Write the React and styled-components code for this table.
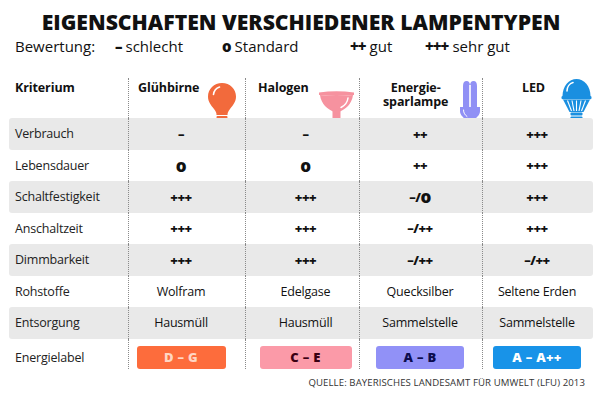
import React from "react";
import styled, { createGlobalStyle } from "styled-components";

const GlobalStyle = createGlobalStyle`
  html, body { margin: 0; padding: 0; background: #fff; }
  body { font-family: "Open Sans", "Noto Sans", sans-serif; color: #111; }
`;

const Page = styled.div`
  width: 600px;
  height: 400px;
  box-sizing: border-box;
  padding: 9px 7px 0 9px;
  display: flex;
  flex-direction: column;
  overflow: hidden;
`;

const Title = styled.h1`
  margin: 0;
  font-size: 21.2px;
  line-height: 25px;
  font-weight: 800;
  text-align: center;
  color: #111;
`;

const Legend = styled.div`
  display: grid;
  grid-template-columns: 100px 107px 128px 75px auto;
  padding-left: 6px;
  margin-top: 2px;
  font-size: 15px;
  line-height: 20px;
  color: #111;
`;

const LegendItem = styled.span`
  white-space: nowrap;
`;

const Sym = styled.b`
  font-weight: 800;
  margin-right: 4px;
  letter-spacing: -1px;
`;

const Table = styled.div`
  margin-top: 17px;
  display: flex;
  flex-direction: column;
`;

const COLS = "119px 117px 114px 123px 111px";

const HeaderRow = styled.div`
  display: grid;
  grid-template-columns: ${COLS};
  height: 45px;
`;

const Row = styled.div`
  display: grid;
  grid-template-columns: ${COLS};
  height: 31.5px;
  background: ${(p) => (p.$shaded ? "#e9e9e9" : "transparent")};
  border-radius: 3px;
`;

const HeadCell = styled.div`
  display: flex;
  align-items: flex-start;
  padding-left: ${(p) => p.$pad}px;
  gap: ${(p) => p.$gap}px;
  border-left: ${(p) => (p.$divider ? "1px dotted #8a8a8a" : "none")};
  margin-top: ${(p) => (p.$divider ? 5 : 0)}px;
  box-sizing: border-box;
`;

const HeadText = styled.div`
  font-size: 12.5px;
  line-height: 14px;
  font-weight: 700;
  letter-spacing: -0.1px;
  margin-top: ${(p) => (p.$divider ? 3 : 8)}px;
  text-align: center;
  white-space: pre-line;
  color: #111;
`;

const IconBox = styled.div`
  align-self: flex-end;
  margin-bottom: ${(p) => p.$drop}px;
  display: flex;
`;

const LabelCell = styled.div`
  display: flex;
  align-items: center;
  padding-left: 6px;
  font-size: 12.5px;
  letter-spacing: -0.2px;
  color: #222;
`;

const ValueCell = styled.div`
  display: flex;
  align-items: center;
  justify-content: center;
  border-left: 1px dotted #8a8a8a;
  padding-left: ${(p) => (p.$shift > 0 ? p.$shift * 2 : 0)}px;
  padding-right: ${(p) => (p.$shift < 0 ? -p.$shift * 2 : 0)}px;
  font-size: ${(p) => (p.$bold ? 13 : 12.5)}px;
  color: #111;
  font-weight: ${(p) => (p.$bold ? 800 : 400)};
  letter-spacing: ${(p) => (p.$bold ? "-0.5px" : "-0.2px")};
`;

const BigO = styled.span`
  font-size: 17px;
  font-weight: 800;
  line-height: 1;
`;

const LastCell = styled(ValueCell)`
  align-items: flex-start;
  padding-top: 7px;
  margin-bottom: 7px;
`;

const Badge = styled.div`
  width: ${(p) => p.$w}px;
  height: 23px;
  border-radius: 3px;
  background: ${(p) => p.$bg};
  color: ${(p) => p.$fg};
  font-size: 13px;
  font-weight: 800;
  display: flex;
  align-items: center;
  justify-content: center;
  letter-spacing: 0.3px;
`;

const Source = styled.div`
  margin-top: 6px;
  text-align: right;
  padding-right: 8px;
  font-size: 9.6px;
  color: #333;
  letter-spacing: 0.1px;
`;

const BulbIcon = () => (
  <svg width="30" height="44" viewBox="0 0 30 44">
    <path
      d="M15 1 C7 1 1 7 1 14.5 C1 20 4 23 7 27 C9 29.5 9.5 31 9.5 33 L20.5 33 C20.5 31 21 29.5 23 27 C26 23 29 20 29 14.5 C29 7 23 1 15 1 Z"
      fill="#f26a3c"
    />
    <path d="M6.5 12.5 C7 8.5 9.5 6 12.5 5" stroke="#fff" strokeWidth="1.6" fill="none" strokeLinecap="round" />
    <rect x="9.5" y="34" width="11" height="2.6" rx="1" fill="#f26a3c" />
    <rect x="9.5" y="37.5" width="11" height="2.6" rx="1" fill="#f26a3c" />
    <path d="M11 41 H19 L17.5 43.5 H12.5 Z" fill="#f26a3c" />
  </svg>
);

const HalogenIcon = () => (
  <svg width="37" height="39" viewBox="0 0 37 39">
    <path d="M1 2.5 Q18.5 0 36 2.5 L36 5 Q18.5 7 1 5 Z" fill="#f6929f" />
    <path d="M2 5 Q18.5 7 35 5 C34 14 27 19.5 22 21.5 L15 21.5 C10 19.5 3 14 2 5 Z" fill="#f6929f" />
    <path d="M30 8 C29.5 12 27 15.5 23 17.5" stroke="#fff" strokeWidth="1.5" fill="none" strokeLinecap="round" />
    <path d="M14.5 21 H22.5 V29 Q22.5 31 20.5 31 H16.5 Q14.5 31 14.5 29 Z" fill="#f6929f" />
    <rect x="15.5" y="30" width="1.6" height="9" fill="#f6929f" />
    <rect x="20" y="30" width="1.6" height="9" fill="#f6929f" />
  </svg>
);

const CflIcon = () => (
  <svg width="22" height="46" viewBox="0 0 22 46">
    <path d="M4 27 V6 Q4 1 7.5 1 Q11 1 11 6 V27 Z" fill="#9090f5" />
    <path d="M11 27 V6 Q11 1 14.5 1 Q18 1 18 6 V27 Z" fill="#9090f5" />
    <rect x="10.2" y="5" width="1.6" height="22" fill="#fff" />
    <path d="M1 27 H21 V31 C21 35 17.5 37.5 16 39 H6 C4.5 37.5 1 35 1 31 Z" fill="#9090f5" />
    <path d="M4.5 30 C4.5 33 6 35 8 36.5" stroke="#fff" strokeWidth="1" fill="none" strokeLinecap="round" />
    <rect x="6.5" y="39.5" width="9" height="2.4" rx="0.8" fill="#9090f5" />
    <rect x="6.5" y="42.4" width="9" height="2" rx="0.8" fill="#9090f5" />
    <path d="M8 44.6 H14 L13 46 H9 Z" fill="#9090f5" />
  </svg>
);

const LedIcon = () => (
  <svg width="31" height="48" viewBox="0 0 31 48">
    <path d="M1.5 18 C1.5 8 8 1 15.5 1 C23 1 29.5 8 29.5 18 Z" fill="#1a8fe0" />
    <path d="M6 13 C6 9 8.5 5.5 12 4.5" stroke="#fff" strokeWidth="1.6" fill="none" strokeLinecap="round" />
    <rect x="0.5" y="18" width="30" height="3.2" rx="1.2" fill="#1a8fe0" />
    <path d="M2 21.5 H29 L22.5 34 H8.5 Z" fill="#1a8fe0" />
    <g stroke="#fff" strokeWidth="1.1">
      <line x1="6.5" y1="22.5" x2="10.5" y2="33" />
      <line x1="11" y1="22.5" x2="13" y2="33" />
      <line x1="15.5" y1="22.5" x2="15.5" y2="33" />
      <line x1="20" y1="22.5" x2="18" y2="33" />
      <line x1="24.5" y1="22.5" x2="20.5" y2="33" />
    </g>
    <rect x="9.5" y="34.6" width="12" height="3" rx="1" fill="#1a8fe0" />
    <rect x="9.5" y="38.4" width="12" height="3" rx="1" fill="#1a8fe0" />
    <path d="M11 42.2 H20 L18 46.5 H13 Z" fill="#1a8fe0" />
  </svg>
);

const columns = [
  { name: "Glühbirne", Icon: BulbIcon, pad: 10, gap: 8, drop: 0, shift: -6, badge: { text: "D – G", bg: "#fd6c3c", fg: "#ffd6c4", w: 89 } },
  { name: "Halogen", Icon: HalogenIcon, pad: 13, gap: 9, drop: -3, shift: 3, badge: { text: "C – E", bg: "#fb9aa8", fg: "#3a0012", w: 92 } },
  { name: "Energie-\nsparlampe", Icon: CflIcon, pad: 24, gap: 11, drop: 0, shift: -1, badge: { text: "A – B", bg: "#9191f7", fg: "#0c0c4e", w: 88 } },
  { name: "LED", Icon: LedIcon, pad: 40, gap: 16, drop: 0, shift: -1, badge: { text: "A – A++", bg: "#1893e8", fg: "#ffffff", w: 88 } },
];

const rows = [
  { label: "Verbrauch", vals: ["–", "–", "++", "+++"], bold: true },
  { label: "Lebensdauer", vals: ["o", "o", "++", "+++"], bold: true },
  { label: "Schaltfestigkeit", vals: ["+++", "+++", "–/o", "+++"], bold: true },
  { label: "Anschaltzeit", vals: ["+++", "+++", "–/++", "+++"], bold: true },
  { label: "Dimmbarkeit", vals: ["+++", "+++", "–/++", "–/++"], bold: true },
  { label: "Rohstoffe", vals: ["Wolfram", "Edelgase", "Quecksilber", "Seltene Erden"], bold: false },
  { label: "Entsorgung", vals: ["Hausmüll", "Hausmüll", "Sammelstelle", "Sammelstelle"], bold: false },
];

const renderRating = (v) => {
  if (!v.includes("o")) return v;
  const parts = v.split("o");
  return (
    <>
      {parts[0]}
      <BigO>o</BigO>
      {parts[1]}
    </>
  );
};

export default function App() {
  return (
    <>
      <GlobalStyle />
      <Page>
        <Title>EIGENSCHAFTEN VERSCHIEDENER LAMPENTYPEN</Title>
        <Legend>
          <LegendItem>Bewertung:</LegendItem>
          <LegendItem><Sym>–</Sym>schlecht</LegendItem>
          <LegendItem><Sym>o</Sym>Standard</LegendItem>
          <LegendItem><Sym>++</Sym>gut</LegendItem>
          <LegendItem><Sym>+++</Sym>sehr gut</LegendItem>
        </Legend>
        <Table>
          <HeaderRow>
            <HeadCell $pad={6} $gap={0}>
              <HeadText>Kriterium</HeadText>
            </HeadCell>
            {columns.map((c) => (
              <HeadCell key={c.name} $pad={c.pad - 1} $gap={c.gap} $divider>
                <HeadText $divider>{c.name}</HeadText>
                <IconBox $drop={c.drop}>
                  <c.Icon />
                </IconBox>
              </HeadCell>
            ))}
          </HeaderRow>
          {rows.map((r, i) => (
            <Row key={r.label} $shaded={i % 2 === 0}>
              <LabelCell>{r.label}</LabelCell>
              {r.vals.map((v, j) => (
                <ValueCell key={j} $bold={r.bold} $shift={columns[j].shift}>
                  {r.bold ? renderRating(v) : v}
                </ValueCell>
              ))}
            </Row>
          ))}
          <Row>
            <LabelCell>Energielabel</LabelCell>
            {columns.map((c) => (
              <LastCell key={c.name} $shift={c.shift}>
                <Badge $bg={c.badge.bg} $fg={c.badge.fg} $w={c.badge.w}>{c.badge.text}</Badge>
              </LastCell>
            ))}
          </Row>
        </Table>
        <Source>QUELLE: BAYERISCHES LANDESAMT FÜR UMWELT (LFU) 2013</Source>
      </Page>
    </>
  );
}
